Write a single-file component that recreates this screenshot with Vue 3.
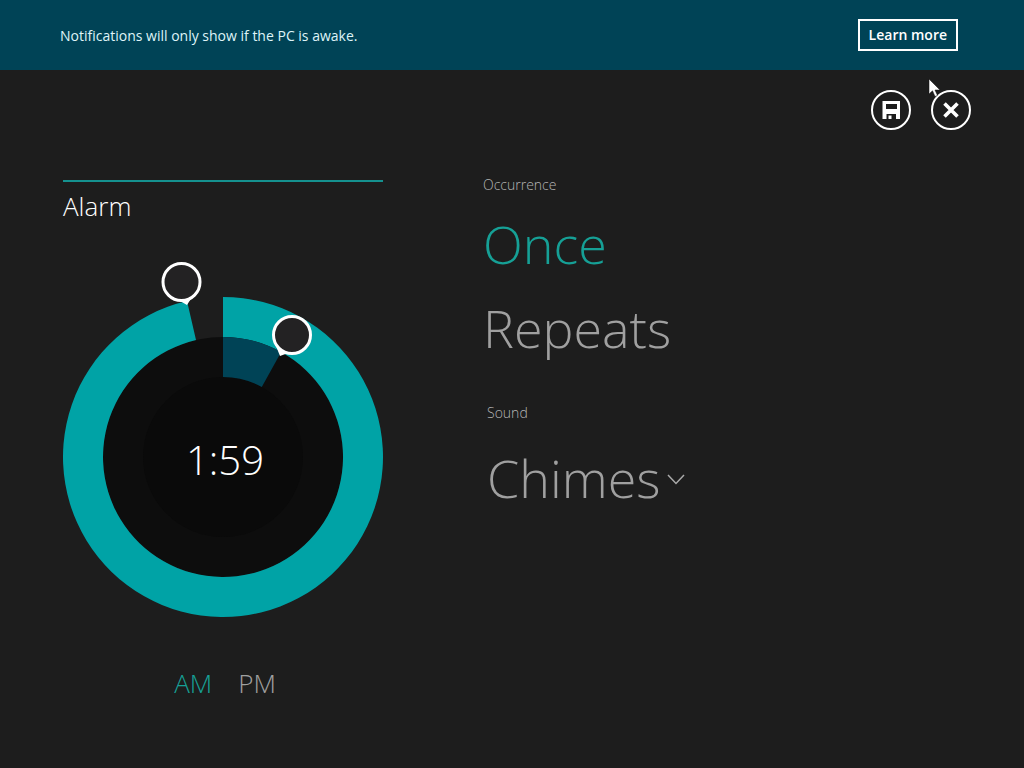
<script setup>
import { computed, ref } from 'vue'

const occurrence = ref('Once')
const period = ref('AM')
const sound = ref('Chimes')
const minuteAngle = ref(347)
const hourAngle = ref(29)

const CX = 160
const CY = 200

function point(radius, angle) {
  const a = (angle * Math.PI) / 180
  return `${(CX + radius * Math.sin(a)).toFixed(2)} ${(CY - radius * Math.cos(a)).toFixed(2)}`
}

function ring(inner, outer, angle) {
  const large = angle > 180 ? 1 : 0
  return `M${point(outer, 0)}A${outer} ${outer} 0 ${large} 1 ${point(outer, angle)}` +
    `L${point(inner, angle)}A${inner} ${inner} 0 ${large} 0 ${point(inner, 0)}Z`
}

const minuteRing = computed(() => ring(120, 160, Number(minuteAngle.value)))
const hourRing = computed(() => ring(80, 120, Number(hourAngle.value)))
</script>

<template>
  <div class="app">
    <header class="notice">
      <p>Notifications will only show if the PC is awake.</p>
      <button type="button" class="learn">Learn more</button>
    </header>

    <div class="toolbar">
      <button type="button" class="round" aria-label="Save">
        <svg width="40" height="40" viewBox="0 0 40 40">
          <circle cx="20" cy="20" r="19" fill="none" stroke="#fff" stroke-width="2" />
          <path fill="#fff" fill-rule="evenodd" d="M11.500 11H29V29H25V24H15.500V29H11.500ZM15 14V19H26V14Z" />
          <rect x="17.500" y="25.500" width="3" height="3.500" fill="#fff" />
        </svg>
      </button>
      <button type="button" class="round" aria-label="Close">
        <svg width="40" height="40" viewBox="0 0 40 40">
          <circle cx="20" cy="20" r="19" fill="none" stroke="#fff" stroke-width="2" />
          <path d="M13.500 13.500L26.500 26.500M26.500 13.500L13.500 26.500" stroke="#fff" stroke-width="3.600" />
        </svg>
      </button>
      <svg class="pointer" width="14" height="20" viewBox="0 0 14 20">
        <path d="M1 1V16L4.500 12.800L7 18.500L9.500 17.400L7 12H12Z" fill="#fff" stroke="#111" stroke-width="0.500" />
      </svg>
    </div>

    <main class="content">
      <section class="clock">
        <h1>Alarm</h1>
        <svg class="dial" viewBox="0 0 320 360" aria-label="Alarm time 1:59">
          <circle cx="160" cy="200" r="120" fill="#0d0d0d" />
          <circle cx="160" cy="200" r="80" fill="#0a0a0a" />
          <path :d="minuteRing" fill="#00a3a6" />
          <path :d="hourRing" fill="#004356" />
          <path d="M117 44L124 48L129 40Z" fill="#fff" />
          <circle cx="118.500" cy="25" r="18.500" fill="#232223" stroke="#fff" stroke-width="3" />
          <path d="M213 89L217 99L225 96Z" fill="#fff" />
          <circle cx="229" cy="78" r="18.500" fill="#232223" stroke="#fff" stroke-width="3" />
          <text class="time" x="162" y="218" text-anchor="middle">1:59</text>
        </svg>
        <input v-model="minuteAngle" class="hidden" type="range" min="0" max="359" aria-label="Minutes" />
        <input v-model="hourAngle" class="hidden" type="range" min="0" max="359" aria-label="Hours" />
        <div class="periods" role="group" aria-label="Period">
          <button
            v-for="p in ['AM', 'PM']"
            :key="p"
            type="button"
            :class="{ active: period === p }"
            :aria-pressed="period === p"
            @click="period = p"
          >{{ p }}</button>
        </div>
      </section>

      <section class="options">
        <h2 id="occurrence">Occurrence</h2>
        <div class="choices" role="group" aria-labelledby="occurrence">
          <button
            v-for="o in ['Once', 'Repeats']"
            :key="o"
            type="button"
            :class="{ active: occurrence === o }"
            :aria-pressed="occurrence === o"
            @click="occurrence = o"
          >{{ o }}</button>
        </div>
        <div class="sound">
          <label for="sound">Sound</label>
          <div class="picker">
            <select id="sound" v-model="sound">
              <option>Chimes</option>
            </select>
            <svg width="18" height="16" viewBox="0 0 18 16">
              <path d="M1 5L9 13.500L17 5" fill="none" stroke="#aaa" stroke-width="1.500" />
            </svg>
          </div>
        </div>
      </section>
    </main>
  </div>
</template>

<style>
body {
  background: #1d1d1d;
}
</style>

<style scoped>
.app {
  min-height: 100vh;
  background: #1d1d1d;
  color: #fff;
  font-family: "Open Sans", "Noto Sans", sans-serif;
  font-weight: 300;
}

button,
select {
  margin: 0;
  padding: 0;
  border: 0;
  background: none;
  color: inherit;
  font: inherit;
}

.notice {
  display: flex;
  align-items: center;
  justify-content: space-between;
  box-sizing: border-box;
  height: 70px;
  padding: 0 66px 0 60px;
  background: #004356;
}

.notice p {
  margin: 0;
  font-size: 14px;
  font-weight: 400;
  color: #dff4f8;
}

.learn {
  height: 32px;
  padding: 0 9px 2px;
  border: 2px solid #fff;
  font-size: 14px;
  font-weight: 600;
}

.toolbar {
  position: relative;
  display: flex;
  justify-content: flex-end;
  gap: 20px;
  padding: 20px 53px 0 0;
}

.round {
  width: 40px;
  height: 40px;
}

.round svg {
  display: block;
}

.pointer {
  position: absolute;
  top: 8px;
  right: 82px;
}

.content {
  display: grid;
  grid-template-columns: 320px 1fr;
  gap: 100px;
  padding: 45px 60px 0 63px;
}

.clock {
  padding-top: 5px;
}

h1 {
  margin: 0;
  padding-top: 8px;
  border-top: 2px solid #15918f;
  font-size: 26px;
  font-weight: 300;
  line-height: 32px;
}

.dial {
  display: block;
  width: 100%;
  margin-top: 35px;
}

.time {
  fill: #fff;
  font-size: 40px;
}

.hidden {
  position: absolute;
  width: 1px;
  height: 1px;
  margin: 0;
  clip-path: inset(50%);
}

.periods {
  display: flex;
  justify-content: center;
  gap: 26px;
  padding: 50px 0 0 4px;
  color: #a0a0a0;
  font-size: 26px;
  line-height: 32px;
}

.periods .active,
.choices .active {
  color: #16a096;
}

h2,
label {
  display: block;
  margin: 0;
  color: #b4b4b4;
  font-size: 14px;
  font-weight: 300;
  line-height: 20px;
}

.choices {
  display: flex;
  flex-direction: column;
  align-items: flex-start;
  gap: 14px;
  margin-top: 14px;
  color: #a0a0a0;
  font-size: 52px;
  line-height: 70px;
}

.sound {
  margin-top: 40px;
  padding-left: 4px;
}

.picker {
  display: flex;
  align-items: center;
  gap: 6px;
  margin-top: 20px;
}

select {
  appearance: none;
  color: #a0a0a0;
  font-size: 52px;
  line-height: 70px;
}
</style>
